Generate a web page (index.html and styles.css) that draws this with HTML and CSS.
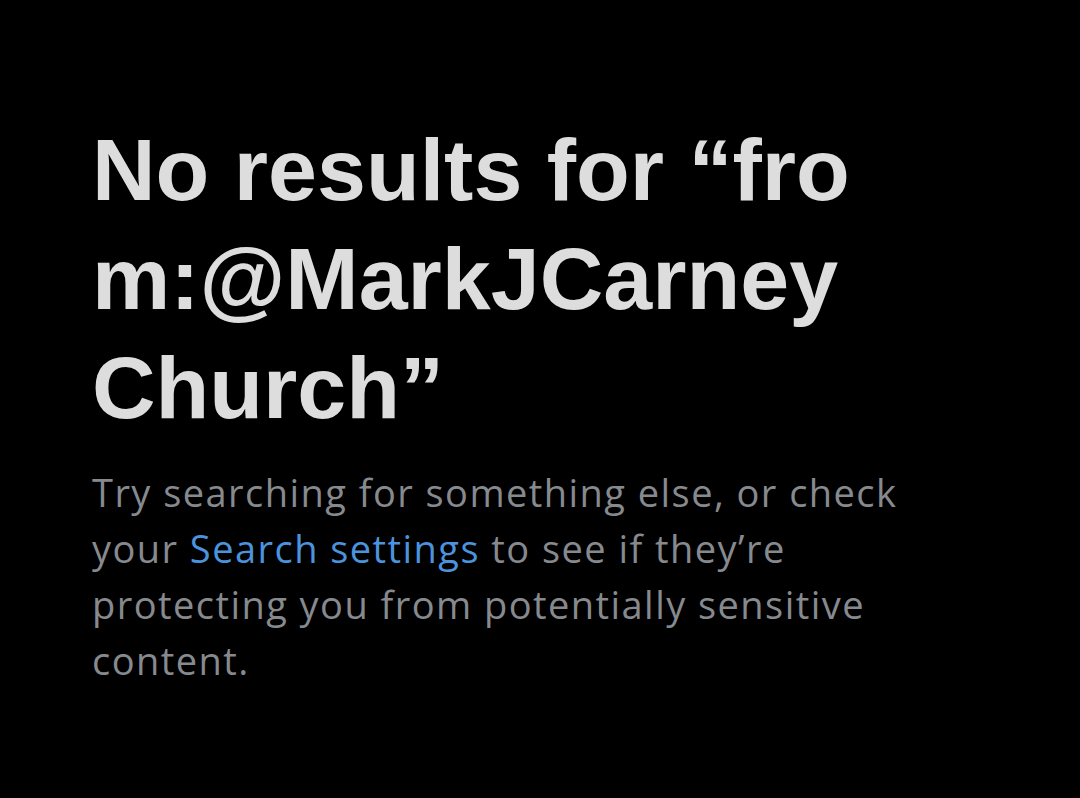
FILE: index.html
```html
<!DOCTYPE html>
<html>
<head>
<meta charset="utf-8">
<link rel="stylesheet" href="styles.css">
</head>
<body>
<main class="empty">
  <h1 class="title">No results for “from:@MarkJCarney Church”</h1>
  <p class="desc">Try searching for something else, or check your <a class="link" href="#">Search settings</a> to see if they’re protecting you from potentially sensitive content.</p>
</main>
</body>
</html>
```
FILE: styles.css
```css
html, body {
  margin: 0;
  padding: 0;
  background: #000;
  height: 100%;
}
.empty {
  padding: 115px 0 0 92px;
  width: 820px;
}
.title {
  margin: 0;
  font-family: "Liberation Sans", Arial, sans-serif;
  font-weight: 700;
  font-size: 88px;
  line-height: 109px;
  color: #dddddd;
  overflow-wrap: anywhere;
  word-break: break-all;
}
.desc {
  margin: 22px 0 0;
  font-family: "Open Sans", "Noto Sans", sans-serif;
  font-size: 38px;
  line-height: 56px;
  letter-spacing: 1.45px;
  color: #868a8f;
}
.link {
  color: #4b93dc;
  text-decoration: none;
}
```
